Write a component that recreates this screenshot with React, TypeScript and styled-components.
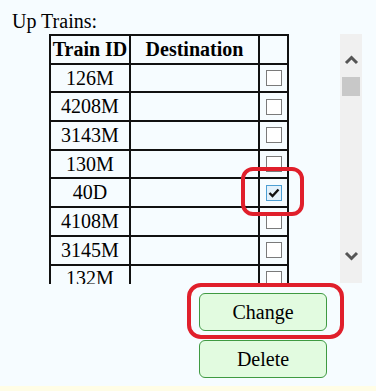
import React from "react";
import styled, { createGlobalStyle } from "styled-components";

const serif = `"Liberation Serif", "Times New Roman", serif`;

const GlobalStyle = createGlobalStyle`
  html, body {
    margin: 0;
    padding: 0;
    background: #f6fcff;
  }
  body {
    font-family: ${serif};
    font-size: 20px;
    color: #000;
  }
`;

const Page = styled.div`
  position: relative;
  width: 376px;
  height: 391px;
  overflow: hidden;
  padding-top: 10px;
  box-sizing: border-box;
  font-family: ${serif};
`;

const Label = styled.div`
  padding-left: 12px;
  line-height: 23px;
  margin-bottom: 1px;
`;

const Panel = styled.div`
  display: flex;
  align-items: flex-start;
  margin-left: 49px;
`;

const Viewport = styled.div`
  width: 291px;
  height: 250px;
  overflow: hidden;
`;

const Table = styled.table`
  border-collapse: collapse;
  table-layout: fixed;
  width: 238px;
  font-family: ${serif};
  font-size: 20px;
`;

const Cell = styled.td<{ $head?: boolean }>`
  border: 2px solid #111;
  padding: 0 1px;
  height: 28.7px;
  box-sizing: border-box;
  text-align: center;
  vertical-align: middle;
  line-height: 23px;
  font-family: ${serif};
  font-size: 20px;
  font-weight: ${(p) => (p.$head ? "bold" : "normal")};
  white-space: nowrap;
`;

const Box = styled.span<{ $checked?: boolean }>`
  display: inline-flex;
  align-items: center;
  justify-content: center;
  width: 16px;
  height: 16px;
  box-sizing: border-box;
  vertical-align: middle;
  margin-top: -4px;
  border: 1px solid ${(p) => (p.$checked ? "#4d9fd3" : "#7a7a7a")};
  background: ${(p) => (p.$checked ? "#e3f1fb" : "#fff")};
`;

const Scrollbar = styled.div`
  width: 22px;
  height: 249px;
  background: #f0f0f0;
  display: flex;
  flex-direction: column;
  align-items: center;
`;

const Arrow = styled.div<{ $gap: number }>`
  margin-top: ${(p) => p.$gap}px;
  height: 10px;
  display: flex;
`;

const Thumb = styled.div`
  width: 18px;
  height: 19px;
  margin-top: 12px;
  background: #c8c8c8;
`;

const Actions = styled.div`
  display: flex;
  flex-direction: column;
  gap: 9px;
  margin: 9px 0 0 199px;
`;

const Button = styled.button`
  width: 128px;
  height: 38px;
  box-sizing: border-box;
  border: 1px solid #3f9a42;
  border-radius: 6px;
  background: #e2fbe0;
  font-family: ${serif};
  font-size: 20px;
  color: #000;
  padding: 0;
`;

const Footer = styled.div`
  margin-top: 8px;
  height: 6px;
  background: #fffde6;
`;

const Mark = styled.div<{ $x: number; $y: number; $w: number; $h: number; $r: number }>`
  position: absolute;
  left: ${(p) => p.$x}px;
  top: ${(p) => p.$y}px;
  width: ${(p) => p.$w}px;
  height: ${(p) => p.$h}px;
  border: 4px solid #e01f2b;
  border-radius: ${(p) => p.$r}px;
  box-sizing: border-box;
  pointer-events: none;
`;

const trains = ["126M", "4208M", "3143M", "130M", "40D", "4108M", "3145M", "132M"];

const Chevron = ({ down }: { down?: boolean }) => (
  <svg width="15" height="10" viewBox="0 0 15 10">
    <path
      d={down ? "M2 2 L7.5 7.5 L13 2" : "M2 8 L7.5 2.5 L13 8"}
      fill="none"
      stroke="#555"
      strokeWidth="3"
    />
  </svg>
);

export default function App() {
  return (
    <>
      <GlobalStyle />
      <Page>
        <Label>Up Trains:</Label>
        <Panel>
          <Viewport>
            <Table>
              <colgroup>
                <col style={{ width: 80 }} />
                <col style={{ width: 129 }} />
                <col style={{ width: 29 }} />
              </colgroup>
              <thead>
                <tr>
                  <Cell as="th" $head>
                    Train ID
                  </Cell>
                  <Cell as="th" $head>
                    Destination
                  </Cell>
                  <Cell as="th" $head />
                </tr>
              </thead>
              <tbody>
                {trains.map((t) => (
                  <tr key={t}>
                    <Cell>{t}</Cell>
                    <Cell />
                    <Cell>
                      <Box $checked={t === "40D"}>
                        {t === "40D" && (
                          <svg width="12" height="10" viewBox="0 0 12 10">
                            <path
                              d="M1.5 5 L4.5 8 L10.5 1.5"
                              fill="none"
                              stroke="#111"
                              strokeWidth="2.4"
                            />
                          </svg>
                        )}
                      </Box>
                    </Cell>
                  </tr>
                ))}
              </tbody>
            </Table>
          </Viewport>
          <Scrollbar>
            <Arrow $gap={21}>
              <Chevron />
            </Arrow>
            <Thumb />
            <Arrow $gap={155}>
              <Chevron down />
            </Arrow>
          </Scrollbar>
        </Panel>
        <Actions>
          <Button>Change</Button>
          <Button>Delete</Button>
        </Actions>
        <Footer />
        <Mark $x={241} $y={167} $w={63} $h={49} $r={12} />
        <Mark $x={187} $y={283} $w={157} $h={56} $r={14} />
      </Page>
    </>
  );
}
